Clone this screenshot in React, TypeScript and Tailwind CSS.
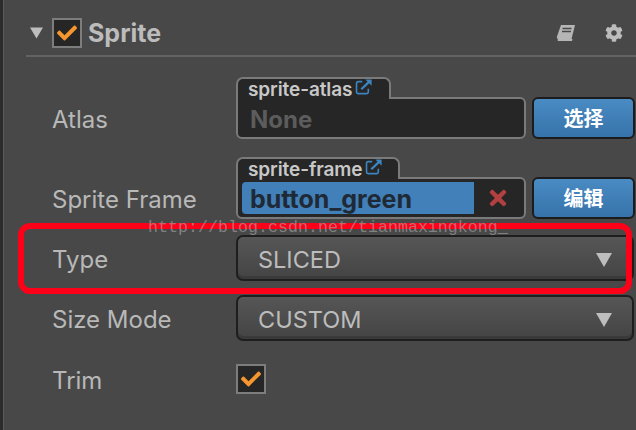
import { FaCheck, FaCog, FaTimes } from 'react-icons/fa';

function CheckBox() {
  return (
    <div className="flex h-[30px] w-[30px] shrink-0 items-center justify-center border-[2px] border-[#7d7d7d] bg-[#262626]">
      <FaCheck className="h-[20px] w-[20px] text-[#f5962e]" />
    </div>
  );
}

function LinkIcon() {
  return (
    <svg viewBox="0 0 20 20" className="-mt-[1px] h-[18px] w-[18px]" fill="none" stroke="#3d85c0" strokeWidth="1.8">
      <path d="M8 4H3.500A1.800 1.800 0 0 0 1.700 5.800V15.500A1.800 1.800 0 0 0 3.500 17.300H13A1.800 1.800 0 0 0 14.800 15.500V12" />
      <path d="M7 12.500L16.500 3.500" strokeWidth="2.600" />
      <path d="M11.500 1.800H18.500V8.500Z" fill="#3d85c0" stroke="none" />
    </svg>
  );
}

function Row({ label, className, children }: { label: string; className: string; children: React.ReactNode }) {
  return (
    <div className={`flex ${className}`}>
      <span className="flex h-[42px] w-[210px] shrink-0 items-center pl-[26px] pt-[4px] text-[24px] leading-none text-[#b8b8b8]">{label}</span>
      {children}
    </div>
  );
}

function AssetField({ tab, tabWidth, children }: { tab: string; tabWidth: string; children: React.ReactNode }) {
  return (
    <div className="w-[290px] shrink-0">
      <div className={`relative z-10 -mb-[2px] flex h-[22px] items-start gap-[3px] rounded-t-[7px] border-[2px] border-b-0 border-[#7a7a7a] bg-[#262626] pl-[10px] ${tabWidth}`}>
        <span className="text-[19px] font-semibold leading-[21px] tracking-[-0.1px] text-[#c8c8c8]">{tab}</span>
        <LinkIcon />
      </div>
      <div className="flex h-[42px] items-center rounded-[6px] rounded-tl-none border-[2px] border-[#7a7a7a] bg-[#262626]">
        {children}
      </div>
    </div>
  );
}

function BlueButton({ label }: { label: string }) {
  return (
    <button className="ml-[6px] flex h-[42px] w-[103px] shrink-0 items-center justify-center rounded-[6px] border-[2px] border-[#1c1c1c] bg-gradient-to-b from-[#4a8bc3] to-[#3673aa] text-[20px] font-bold text-white [font-family:'Noto_Sans_CJK_SC',sans-serif]">
      {label}
    </button>
  );
}

function Select({ value }: { value: string }) {
  return (
    <div className="flex h-[46px] w-[398px] shrink-0 items-center justify-between rounded-[7px] border-[2px] border-[#1e1e1e] bg-gradient-to-b from-[#565656] to-[#444444] pl-[20px] pr-[20px] pt-[3px] shadow-[inset_0_-3px_0_#3a3a3a]">
      <span className="text-[23.500px] leading-none text-[#bcbcbc]">{value}</span>
      <svg viewBox="0 0 16 14" className="h-[14px] w-[16px]">
        <path d="M0 0H16L8 14Z" fill="#bdbdbd" />
      </svg>
    </div>
  );
}

export default function App() {
  return (
    <div className="relative flex h-[430px] w-[636px] overflow-hidden bg-[#484848] font-['Inter',sans-serif]">
      <div className="h-full w-[3px] shrink-0 bg-[#2c2c2c]" />
      <div className="h-full w-[1px] shrink-0 bg-[#5a5a5a]" />
      <div className="flex min-w-0 flex-1 flex-col pl-[22px]">
        <div className="flex h-[57px] shrink-0 items-center border-b-[2px] border-[#626262] pt-[11px]">
          <svg viewBox="0 0 14 12" className="ml-[4px] h-[12px] w-[13px]">
            <path d="M0 0H14L7 12Z" fill="#bdbdbd" />
          </svg>
          <div className="ml-[9px]">
            <CheckBox />
          </div>
          <span className="ml-[6px] text-[25px] font-bold leading-none text-[#bcbcbc]">Sprite</span>
          <svg viewBox="0 0 20 18" className="ml-auto h-[18px] w-[20px]">
            <path d="M5 1H19L15.500 15H2.500Q.500 15 .800 13Z" fill="#b5b5b5" />
            <path d="M2 17H16L16.500 15H2Q1 16 2 17Z" fill="#b5b5b5" />
            <path d="M6.500 4.500H15.500M6 7.500H15" stroke="#484848" strokeWidth="1.500" />
          </svg>
          <FaCog className="ml-[29px] mr-[13px] h-[18px] w-[18px] text-[#bcbcbc]" />
        </div>
        <div className="flex flex-col">
          <Row label="Atlas" className="mt-[20px] items-end">
            <AssetField tab="sprite-atlas" tabWidth="w-[155px]">
              <span className="pl-[12px] pt-[3px] text-[24px] font-bold leading-none text-[#5c5c5c]">None</span>
            </AssetField>
            <BlueButton label="选择" />
          </Row>
          <Row label="Sprite Frame" className="mt-[18px] items-end">
            <AssetField tab="sprite-frame" tabWidth="w-[164px]">
              <span className="ml-[4px] flex h-[32px] w-[232px] items-center rounded-l-[4px] bg-[#4180b8] pl-[8px] pt-[2px] text-[25px] font-bold leading-none text-[#1f2a36]">button_green</span>
              <FaTimes className="ml-[12px] h-[24px] w-[24px] text-[#b34040]" />
            </AssetField>
            <BlueButton label="编辑" />
          </Row>
          <Row label="Type" className="mt-[16px] items-center">
            <Select value="SLICED" />
          </Row>
          <Row label="Size Mode" className="mt-[14px] items-center">
            <Select value="CUSTOM" />
          </Row>
          <Row label="Trim" className="mt-[17px] items-center">
            <CheckBox />
          </Row>
        </div>
      </div>
      <div className="pointer-events-none absolute left-[18px] top-[223px] h-[71px] w-[614px] rounded-[12px] border-[6px] border-[#ff0019]" />
      <span className="pointer-events-none absolute left-[148px] top-[218px] whitespace-nowrap font-['Liberation_Mono',monospace] text-[16.670px] leading-[20px] text-[#a8a8a8]/60">
        http://blog.csdn.net/tianmaxingkong_
      </span>
    </div>
  );
}
